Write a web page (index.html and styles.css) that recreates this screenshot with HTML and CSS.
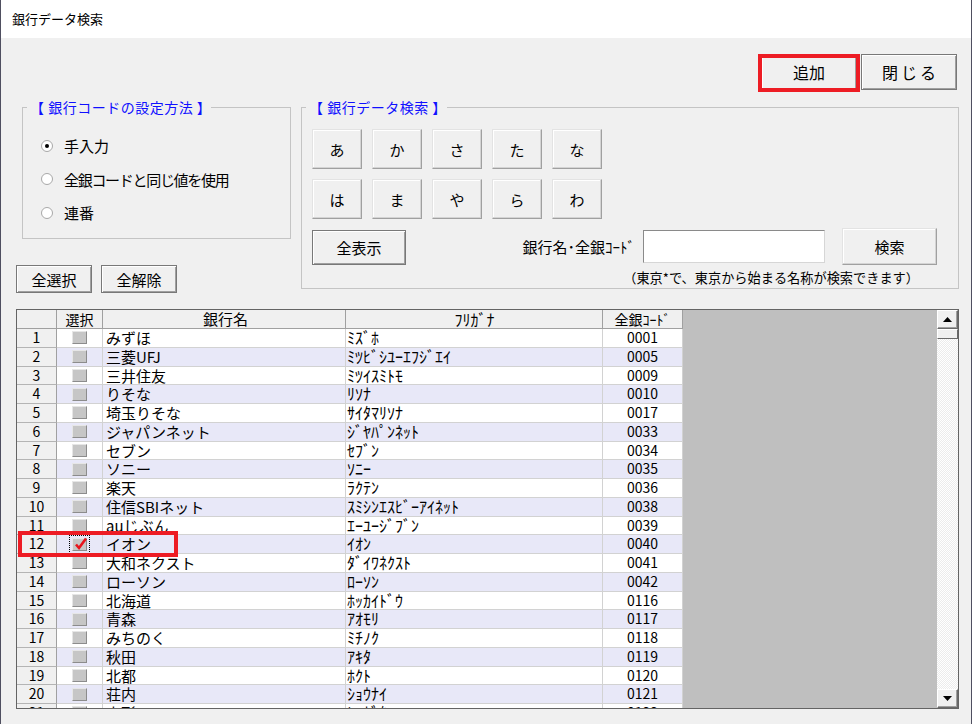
FILE: index.html
```html
<!DOCTYPE html>
<html lang="ja">
<head>
<meta charset="utf-8">
<title>銀行データ検索</title>
<link rel="stylesheet" href="styles.css">
</head>
<body>
<div class="window">
  <div class="titlebar">銀行データ検索</div>
  <div class="content">
    <div class="topbar">
      <button class="btn btn-dark btn-top">追加</button>
      <button class="btn btn-dark btn-top btn-close">閉じる</button>
    </div>
    <div class="mid">
      <div class="left">
        <fieldset class="group group1">
          <legend>【 銀行コードの設定方法 】</legend>
          <div class="radios">
            <label class="radio-row"><span class="radio checked"></span><span>手入力</span></label>
            <label class="radio-row"><span class="radio"></span><span class="narrow">全銀コードと同じ値を使用</span></label>
            <label class="radio-row"><span class="radio"></span><span>連番</span></label>
          </div>
        </fieldset>
        <div class="selbtns">
          <button class="btn btn-dark btn-sel">全選択</button>
          <button class="btn btn-dark btn-sel">全解除</button>
        </div>
      </div>
      <fieldset class="group group2">
        <legend>【 銀行データ検索 】</legend>
        <div class="kana">
          <button class="btn btn-light">あ</button>
          <button class="btn btn-light">か</button>
          <button class="btn btn-light">さ</button>
          <button class="btn btn-light">た</button>
          <button class="btn btn-light">な</button>
          <button class="btn btn-light">は</button>
          <button class="btn btn-light">ま</button>
          <button class="btn btn-light">や</button>
          <button class="btn btn-light">ら</button>
          <button class="btn btn-light">わ</button>
        </div>
        <div class="searchrow">
          <button class="btn btn-dark btn-all">全表示</button>
          <span class="search-label">銀行名･全銀ｺｰﾄﾞ</span>
          <input class="search-input" type="text">
          <button class="btn btn-light btn-search">検索</button>
        </div>
        <div class="note">（東京*で、東京から始まる名称が検索できます）</div>
      </fieldset>
    </div>
    <div class="grid">
      <div class="table">
        <div class="row head">
          <div class="c rh"></div>
          <div class="c sel">選択</div>
          <div class="c name">銀行名</div>
          <div class="c kana-c">ﾌﾘｶﾞﾅ</div>
          <div class="c code">全銀ｺｰﾄﾞ</div>
        </div>
        <div class="row"><div class="c rh">1</div><div class="c sel"><span class="cb"></span></div><div class="c name">みずほ</div><div class="c kana-c">ﾐｽﾞﾎ</div><div class="c code">0001</div></div>
        <div class="row alt"><div class="c rh">2</div><div class="c sel"><span class="cb"></span></div><div class="c name">三菱UFJ</div><div class="c kana-c">ﾐﾂﾋﾞｼﾕｰｴﾌｼﾞｴｲ</div><div class="c code">0005</div></div>
        <div class="row"><div class="c rh">3</div><div class="c sel"><span class="cb"></span></div><div class="c name">三井住友</div><div class="c kana-c">ﾐﾂｲｽﾐﾄﾓ</div><div class="c code">0009</div></div>
        <div class="row alt"><div class="c rh">4</div><div class="c sel"><span class="cb"></span></div><div class="c name">りそな</div><div class="c kana-c">ﾘｿﾅ</div><div class="c code">0010</div></div>
        <div class="row"><div class="c rh">5</div><div class="c sel"><span class="cb"></span></div><div class="c name">埼玉りそな</div><div class="c kana-c">ｻｲﾀﾏﾘｿﾅ</div><div class="c code">0017</div></div>
        <div class="row alt"><div class="c rh">6</div><div class="c sel"><span class="cb"></span></div><div class="c name">ジャパンネット</div><div class="c kana-c">ｼﾞﾔﾊﾟﾝﾈｯﾄ</div><div class="c code">0033</div></div>
        <div class="row"><div class="c rh">7</div><div class="c sel"><span class="cb"></span></div><div class="c name">セブン</div><div class="c kana-c">ｾﾌﾞﾝ</div><div class="c code">0034</div></div>
        <div class="row alt"><div class="c rh">8</div><div class="c sel"><span class="cb"></span></div><div class="c name">ソニー</div><div class="c kana-c">ｿﾆｰ</div><div class="c code">0035</div></div>
        <div class="row"><div class="c rh">9</div><div class="c sel"><span class="cb"></span></div><div class="c name">楽天</div><div class="c kana-c">ﾗｸﾃﾝ</div><div class="c code">0036</div></div>
        <div class="row alt"><div class="c rh">10</div><div class="c sel"><span class="cb"></span></div><div class="c name">住信SBIネット</div><div class="c kana-c">ｽﾐｼﾝｴｽﾋﾞｰｱｲﾈｯﾄ</div><div class="c code">0038</div></div>
        <div class="row"><div class="c rh">11</div><div class="c sel"><span class="cb"></span></div><div class="c name">auじぶん</div><div class="c kana-c">ｴｰﾕｰｼﾞﾌﾞﾝ</div><div class="c code">0039</div></div>
        <div class="row alt"><div class="c rh">12</div><div class="c sel"><span class="cb checked"><svg class="tick" width="16" height="14" viewBox="0 0 16 14"><path d="M4 7.5 L7 11 L14 1.5" fill="none" stroke="#e8141c" stroke-width="2.6"/></svg></span></div><div class="c name">イオン</div><div class="c kana-c">ｲｵﾝ</div><div class="c code">0040</div></div>
        <div class="row"><div class="c rh">13</div><div class="c sel"><span class="cb"></span></div><div class="c name">大和ネクスト</div><div class="c kana-c">ﾀﾞｲﾜﾈｸｽﾄ</div><div class="c code">0041</div></div>
        <div class="row alt"><div class="c rh">14</div><div class="c sel"><span class="cb"></span></div><div class="c name">ローソン</div><div class="c kana-c">ﾛｰｿﾝ</div><div class="c code">0042</div></div>
        <div class="row"><div class="c rh">15</div><div class="c sel"><span class="cb"></span></div><div class="c name">北海道</div><div class="c kana-c">ﾎｯｶｲﾄﾞｳ</div><div class="c code">0116</div></div>
        <div class="row alt"><div class="c rh">16</div><div class="c sel"><span class="cb"></span></div><div class="c name">青森</div><div class="c kana-c">ｱｵﾓﾘ</div><div class="c code">0117</div></div>
        <div class="row"><div class="c rh">17</div><div class="c sel"><span class="cb"></span></div><div class="c name">みちのく</div><div class="c kana-c">ﾐﾁﾉｸ</div><div class="c code">0118</div></div>
        <div class="row alt"><div class="c rh">18</div><div class="c sel"><span class="cb"></span></div><div class="c name">秋田</div><div class="c kana-c">ｱｷﾀ</div><div class="c code">0119</div></div>
        <div class="row"><div class="c rh">19</div><div class="c sel"><span class="cb"></span></div><div class="c name">北都</div><div class="c kana-c">ﾎｸﾄ</div><div class="c code">0120</div></div>
        <div class="row alt"><div class="c rh">20</div><div class="c sel"><span class="cb"></span></div><div class="c name">荘内</div><div class="c kana-c">ｼｮｳﾅｲ</div><div class="c code">0121</div></div>
        <div class="row"><div class="c rh">21</div><div class="c sel"><span class="cb"></span></div><div class="c name">山形</div><div class="c kana-c">ﾔﾏｶﾞﾀ</div><div class="c code">0122</div></div>
      </div>
      <div class="empty"></div>
      <div class="scrollbar">
        <div class="sb-btn"><svg width="9" height="5" viewBox="0 0 9 5"><path d="M0 5 L4.5 0 L9 5 Z" fill="#000"/></svg></div>
        <div class="sb-thumb"></div>
        <div class="sb-track"></div>
        <div class="sb-btn"><svg width="9" height="5" viewBox="0 0 9 5"><path d="M0 0 L9 0 L4.5 5 Z" fill="#000"/></svg></div>
      </div>
    </div>
  </div>
  <div class="mark mark-add"></div>
  <div class="mark mark-row"></div>
</div>
</body>
</html>
```

FILE: styles.css
```css
html, body {
  margin: 0;
  padding: 0;
  background: #f0f0f0;
}

.window {
  position: relative;
  width: 972px;
  height: 724px;
  box-sizing: border-box;
  border-left: 1px solid #4f4f60;
  border-right: 1px solid #4f4f60;
  background: #f0f0f0;
  overflow: hidden;
  font-family: "Noto Sans CJK JP", "Noto Sans", sans-serif;
  color: #000;
}

.titlebar {
  height: 38px;
  background: #fff;
  padding-left: 11px;
  font-size: 13px;
  line-height: 38px;
}

.content {
  padding: 0 12px 0 15px;
}

.btn {
  font-family: "Noto Sans CJK JP", "Noto Sans", sans-serif;
  font-size: 15px;
  color: #000;
  background: #f0f0f0;
  box-sizing: border-box;
  padding: 0;
  margin: 0;
  line-height: 1;
  cursor: default;
}

.btn-dark {
  border: 1px solid #787878;
  box-shadow: inset 1px 1px 0 #ffffff, inset -1px -1px 0 #a0a0a0;
}

.btn-light {
  border: 1px solid;
  border-color: #e3e3e3 #a0a0a0 #a0a0a0 #e3e3e3;
  box-shadow: inset -1px -1px 0 #d4d4d4, inset 1px 1px 0 #ffffff;
}

/* top buttons */
.topbar {
  display: flex;
  justify-content: flex-end;
  gap: 4px;
  margin-top: 16px;
  padding-right: 2px;
  height: 36px;
}

.btn-top {
  width: 96px;
  height: 36px;
  font-size: 16px;
}

.btn-close {
  letter-spacing: 3px;
  padding-left: 3px;
}

/* group boxes */
.mid {
  display: flex;
  margin-top: 10px;
}

.left {
  width: 285px;
}

.group {
  margin: 0;
  border: 1px solid #c4c4c4;
  box-sizing: border-box;
  padding: 15px 0 0 4px;
}

.group legend {
  font-size: 14px;
  line-height: 14px;
  color: #1010ff;
  padding: 0 0 0 3px;
  letter-spacing: 0.5px;
}

.group1 {
  margin-left: 6px;
  width: 269px;
  height: 139px;
}

.radios {
  margin-left: 14px;
}

.radio-row {
  display: flex;
  align-items: center;
  height: 33.5px;
  font-size: 15px;
}

.narrow {
  letter-spacing: -1.3px;
}

.radio {
  width: 12px;
  height: 12px;
  box-sizing: border-box;
  border-radius: 50%;
  border: 1px solid #a8a8a8;
  background: #fff;
  margin-right: 11px;
  display: flex;
  align-items: center;
  justify-content: center;
}

.radio.checked::after {
  content: "";
  width: 4px;
  height: 4px;
  border-radius: 50%;
  background: #000;
}

.selbtns {
  display: flex;
  gap: 9px;
  margin-top: 26px;
}

.btn-sel {
  width: 76px;
  height: 28px;
  font-size: 15px;
}

.group2 {
  width: 658px;
  height: 189px;
  padding-right: 21px;
}

.kana {
  margin-left: 6px;
  display: grid;
  grid-template-columns: repeat(5, 50px);
  grid-auto-rows: 40px;
  column-gap: 10px;
  row-gap: 10px;
}

.kana .btn {
  font-size: 15px;
}

.searchrow {
  margin-left: 6px;
  margin-top: 9px;
  height: 37px;
  display: flex;
  align-items: center;
}

.btn-all {
  width: 94px;
  height: 35px;
  margin-top: 2px;
}

.search-label {
  margin-left: auto;
  margin-right: 8px;
  font-size: 15px;
}

.search-input {
  width: 182px;
  height: 33px;
  box-sizing: border-box;
  margin: 0;
  border: 1px solid;
  border-color: #8a8a8a #d6d6d6 #d6d6d6 #8a8a8a;
  background: #fff;
  outline: none;
}

.btn-search {
  width: 95px;
  height: 37px;
  margin-left: 17px;
  font-size: 15px;
}

.note {
  text-align: right;
  margin-right: 18px;
  margin-top: 5px;
  font-size: 13.2px;
  line-height: 16px;
}

/* grid */
.grid {
  margin-top: 16px;
  height: 400px;
  box-sizing: border-box;
  border: 1px solid #646464;
  display: flex;
  overflow: hidden;
}

.table {
  width: 666px;
  flex: none;
  background: #fff;
}

.row {
  display: grid;
  grid-template-columns: 40px 46px 243px 257px 80px;
  height: 18.75px;
  background: #fff;
}

.row.alt {
  background: #e8e8f8;
}

.row.head {
  height: 19px;
  background: #f0f0f0;
}

.c {
  box-sizing: border-box;
  border-right: 1px solid #d2d2d2;
  border-bottom: 1px solid #d2d2d2;
  font-size: 14px;
  line-height: 17px;
  white-space: nowrap;
}

.head .c {
  text-align: center;
  border-right-color: #a0a0a0;
  border-bottom-color: #a0a0a0;
  line-height: 18px;
}

.rh {
  background: #f0f0f0;
  text-align: center;
  border-right-color: #a0a0a0;
  border-bottom-color: #b4b4b4;
}

.sel {
  display: flex;
  align-items: center;
  justify-content: center;
}

.name {
  padding-left: 3px;
  font-size: 15px;
}

.kana-c {
  padding-left: 1px;
  font-size: 16px;
}

.code {
  text-align: center;
}

.cb {
  position: relative;
  width: 15px;
  height: 13px;
  box-sizing: border-box;
  background: #c6c6c6;
  border: 1px solid;
  border-color: #e6e6e6 #8c8c8c #8c8c8c #e6e6e6;
}

.cb.checked {
  outline: 1px dotted #000;
  outline-offset: 2px;
}

.tick {
  position: absolute;
  left: -1px;
  top: -2px;
  overflow: visible;
}

.empty {
  flex: 1;
  background: #bfbfbf;
}

.scrollbar {
  width: 21px;
  flex: none;
  display: flex;
  flex-direction: column;
  background: repeating-conic-gradient(#ffffff 0 25%, #ececec 0 50%) 0 0 / 2px 2px;
}

.sb-btn {
  height: 19px;
  box-sizing: border-box;
  background: #f0f0f0;
  border: 1px solid;
  border-color: #ffffff #6a6a6a #6a6a6a #ffffff;
  box-shadow: inset -1px -1px 0 #a0a0a0;
  display: flex;
  align-items: center;
  justify-content: center;
}

.sb-thumb {
  height: 10px;
  box-sizing: border-box;
  background: #f0f0f0;
  border: 1px solid;
  border-color: #ffffff #6a6a6a #6a6a6a #ffffff;
}

.sb-track {
  flex: 1;
}

/* red annotation marks */
.mark {
  position: absolute;
  border: 4px solid #ed1c24;
  box-sizing: border-box;
}

.mark-add {
  left: 757px;
  top: 54px;
  width: 102px;
  height: 38px;
}

.mark-row {
  left: 17px;
  top: 531px;
  width: 160px;
  height: 26px;
}
```
